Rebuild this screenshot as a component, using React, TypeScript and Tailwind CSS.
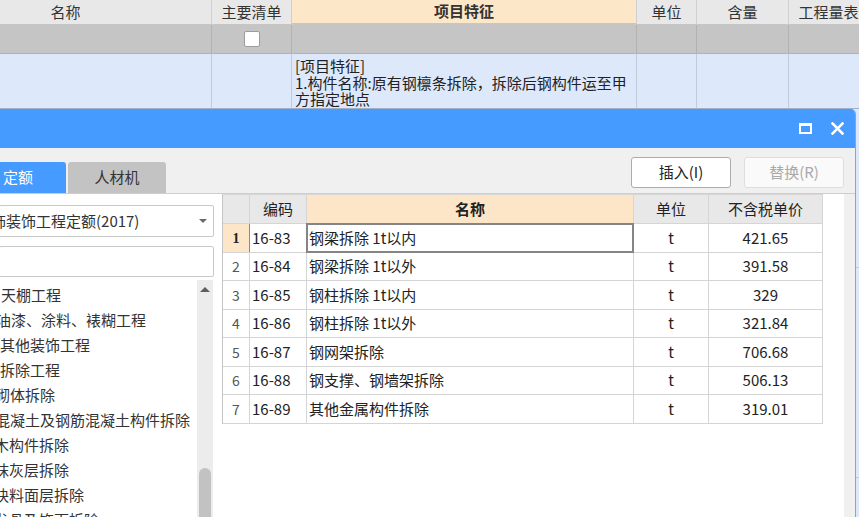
const sheetHeaders = [
  { label: '名称', className: 'ml-[-80px] w-[292px]' },
  { label: '主要清单', className: 'w-[80px]' },
  { label: '项目特征', className: 'w-[345px] bg-[#fde7c9] font-bold border-b-2 border-b-[#4a98f0]' },
  { label: '单位', className: 'w-[60px]' },
  { label: '含量', className: 'w-[92px]' },
  { label: '工程量表达式', className: 'w-[110px]' },
];

const colWidths = ['ml-[-80px] w-[292px]', 'w-[80px]', 'w-[345px]', 'w-[60px]', 'w-[92px]', 'w-[110px]'];

const treeItems = [
  { label: '天棚工程', offset: 'pl-[2px]' },
  { label: '油漆、涂料、裱糊工程', offset: 'ml-[-3px]' },
  { label: '其他装饰工程', offset: 'pl-[1px]' },
  { label: '拆除工程', offset: 'pl-[1px]' },
  { label: '砌体拆除', offset: 'ml-[-4px]' },
  { label: '混凝土及钢筋混凝土构件拆除', offset: 'ml-[-4px]' },
  { label: '木构件拆除', offset: 'ml-[-5px]' },
  { label: '抹灰层拆除', offset: 'ml-[-5px]' },
  { label: '块料面层拆除', offset: 'ml-[-5px]' },
  { label: '龙骨及饰面拆除', offset: 'ml-[-5px]' },
];

const quotaRows = [
  { code: '16-83', name: '钢梁拆除 1t以内', price: '421.65', h: 'h-[29px]' },
  { code: '16-84', name: '钢梁拆除 1t以外', price: '391.58', h: 'h-[28px]' },
  { code: '16-85', name: '钢柱拆除 1t以内', price: '329', h: 'h-[29px]' },
  { code: '16-86', name: '钢柱拆除 1t以外', price: '321.84', h: 'h-[28px]' },
  { code: '16-87', name: '钢网架拆除', price: '706.68', h: 'h-[29px]' },
  { code: '16-88', name: '钢支撑、钢墙架拆除', price: '506.13', h: 'h-[28px]' },
  { code: '16-89', name: '其他金属构件拆除', price: '319.01', h: 'h-[29px]' },
];

function Sheet() {
  return (
    <div className="flex flex-col">
      <div className="flex h-[25px] bg-[#e8e8e8]">
        {sheetHeaders.map((col) => (
          <div
            key={col.label}
            className={`flex shrink-0 items-center justify-center whitespace-nowrap border-r border-b border-r-[#d0d0d0] border-b-[#c6c6c6] ${col.className}`}
          >
            {col.label}
          </div>
        ))}
      </div>
      <div className="flex h-[29px] bg-[#c5c5c5]">
        {colWidths.map((w, i) => (
          <div key={i} className={`flex shrink-0 items-center justify-center border-r border-b border-[#b2b2b2] ${w}`}>
            {i === 1 ? <div className="h-[16px] w-[16px] rounded-[2px] border border-[#9c9c9c] bg-white" /> : null}
          </div>
        ))}
      </div>
      <div className="flex h-[55px] bg-[#dde9fb]">
        {colWidths.map((w, i) => (
          <div key={i} className={`shrink-0 border-r border-b border-r-[#c2cad8] border-b-[#9fb0c8] ${w}`}>
            {i === 2 ? (
              <div className="flex flex-col whitespace-nowrap pt-[4px] pl-[3px] text-[#222]">
                <span className="h-[16.5px] leading-[16.5px]">[项目特征]</span>
                <span className="h-[16.5px] leading-[16.5px]">1.构件名称:原有钢檩条拆除，拆除后钢构件运至甲</span>
                <span className="h-[16.5px] leading-[16.5px]">方指定地点</span>
              </div>
            ) : null}
          </div>
        ))}
      </div>
      <div className="h-[159px] border-b border-[#c2cad8]" />
      <div className="h-[210px] border-b border-[#c2cad8]" />
    </div>
  );
}

function QuotaTable() {
  return (
    <div className="w-[601px] border-t border-l border-t-[#d8d8d8] border-l-[#c4c4c4] text-[#222]">
      <div className="flex h-[29px] border-b border-[#d5d5d5] bg-[#e8e8e8]">
        <div className="w-[27px] border-r border-[#d5d5d5]" />
        <div className="flex w-[57px] items-center justify-center border-r border-[#d5d5d5]">编码</div>
        <div className="flex w-[327px] items-center justify-center border-r border-[#d5d5d5] bg-[#fde6c8] font-bold">名称</div>
        <div className="flex w-[75px] items-center justify-center border-r border-[#d5d5d5]">单位</div>
        <div className="flex w-[114px] items-center justify-center border-r border-[#d5d5d5]">不含税单价</div>
      </div>
      {quotaRows.map((row, i) => {
        const active = i === 0;
        return (
          <div key={row.code} className={`flex border-b border-[#d5d5d5] ${row.h}`}>
            <div
              className={`flex w-[27px] items-center justify-center border-r text-[14px] ${
                active
                  ? "border-r-[#4a98f0] bg-[#fde6c8] font-['Liberation_Serif',serif] font-bold text-[#222]"
                  : 'border-r-[#d5d5d5] text-[#555]'
              }`}
            >
              {i + 1}
            </div>
            <div className="flex w-[57px] items-center border-r border-[#d5d5d5] pl-[2px]">{row.code}</div>
            <div className="relative flex w-[327px] items-center whitespace-pre border-r border-[#d5d5d5] pl-[2px]">
              {row.name}
              {active ? <div className="absolute -inset-px border-2 border-[#858585]" /> : null}
            </div>
            <div className="flex w-[75px] items-center justify-center border-r border-[#d5d5d5]">t</div>
            <div className="flex w-[114px] items-center justify-center border-r border-[#d5d5d5]">{row.price}</div>
          </div>
        );
      })}
    </div>
  );
}

function QuotaDialog() {
  return (
    <div className="absolute top-[109px] left-[-1px] flex h-[420px] w-[857px] flex-col overflow-hidden rounded-tr-[5px] border-r border-[#8ea5c2] bg-[#f0f0f0]">
      <div className="flex h-[39px] shrink-0 items-center justify-end gap-[19px] bg-[#459bff] pr-[11px]">
        <div className="h-[11px] w-[13px] border-2 border-t-[3px] border-white" />
        <svg width="13" height="13" viewBox="0 0 13 13">
          <path d="M1.5 1.5 L11.5 11.5 M11.5 1.5 L1.5 11.5" stroke="#fff" strokeWidth="2.6" strokeLinecap="square" />
        </svg>
      </div>

      <div className="flex h-[46px] shrink-0 justify-between border-b border-[#cdcdcd]">
        <div className="flex items-start gap-[2px] pt-[14px]">
          <div className="flex h-[31px] w-[67px] items-center rounded-tr-[3px] bg-[#459bff] pl-[4px] text-white">定额</div>
          <div className="flex h-[31px] w-[98px] items-center justify-center rounded-t-[3px] bg-[#c3c3c3] text-[#333]">人材机</div>
        </div>
        <div className="flex items-start gap-[13px] pt-[9px] pr-[11px]">
          <button className="flex h-[31px] w-[100px] items-center justify-center rounded-[3px] border border-[#acacac] bg-white text-[#222]">
            插入(I)
          </button>
          <button className="flex h-[31px] w-[100px] items-center justify-center rounded-[3px] border border-[#dedede] bg-[#fafafa] text-[#a9a9a9]">
            替换(R)
          </button>
        </div>
      </div>

      <div className="flex flex-1">
        <div className="flex w-[223px] flex-col bg-white">
          <div className="mt-[11px] flex h-[32px] w-[215px] items-center overflow-hidden rounded-[2px] border border-[#c9c9c9]">
            <span className="ml-[-9px] whitespace-nowrap">饰装饰工程定额(2017)</span>
            <span className="mr-[6px] ml-auto h-0 w-0 border-x-[4px] border-t-[4px] border-x-transparent border-t-[#6a6a6a]" />
          </div>
          <div className="mt-[9px] h-[31px] w-[215px] rounded-[2px] border border-[#c9c9c9]" />
          <div className="mt-[3px] flex flex-1">
            <div className="w-[198px] overflow-hidden pt-[2px]">
              {treeItems.map((item) => (
                <div key={item.label} className={`h-[25px] whitespace-nowrap leading-[25px] ${item.offset}`}>
                  {item.label}
                </div>
              ))}
            </div>
            <div className="flex w-[16px] flex-col items-center bg-[#ececec]">
              <div className="mt-[7px] h-0 w-0 border-x-[5px] border-b-[5px] border-x-transparent border-b-[#5e5e5e]" />
              <div className="mt-[176px] h-[90px] w-[12px] rounded-[6px] bg-[#c2c2c2]" />
            </div>
          </div>
        </div>
        <div className="mr-[11px] flex-1 bg-white">
          <QuotaTable />
        </div>
      </div>
    </div>
  );
}

export default function App() {
  return (
    <div className="relative h-[517px] w-[859px] overflow-hidden bg-[#dde9fb] font-['Noto_Sans_CJK_SC',sans-serif] text-[15px] text-[#333]">
      <Sheet />
      <QuotaDialog />
    </div>
  );
}
